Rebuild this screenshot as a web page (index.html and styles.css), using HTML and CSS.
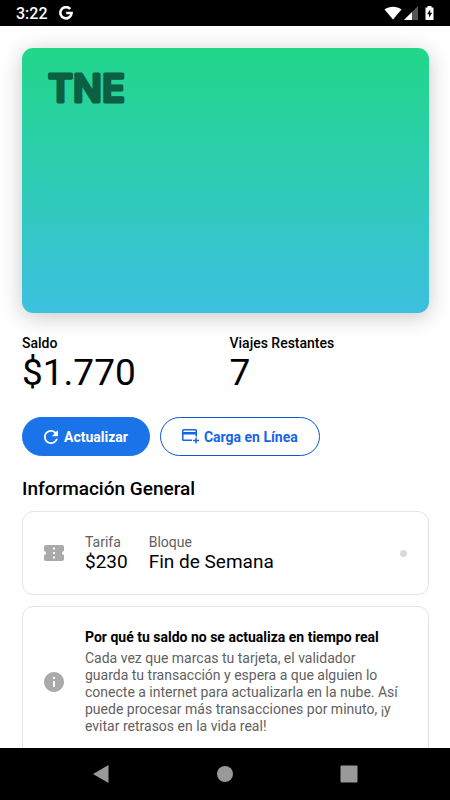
FILE: index.html
```html
<!DOCTYPE html>
<html lang="es">
<head>
<meta charset="utf-8">
<meta name="viewport" content="width=device-width, initial-scale=1">
<title>Tarjeta TNE</title>
<link rel="stylesheet" href="styles.css">
</head>
<body>
<header class="status">
  <time class="clock">3:22</time>
  <svg class="google" viewBox="0 0 14 14" aria-hidden="true"><path d="M11.2 3A5.6 5.6 0 1 0 12.6 7H7.2" fill="none" stroke="#fff" stroke-width="2.6"/></svg>
  <div class="signals">
    <svg width="18" height="14" viewBox="0 0 18 14" aria-hidden="true"><path d="M.5 3.6C5.500-.2 12.500-.2 17.500 3.600L9 13.500Z" fill="#fff"/></svg>
    <svg width="14" height="14" viewBox="0 0 14 14" aria-hidden="true"><path d="M14 0V14H0Z" fill="#555"/><path d="M8 6V14H0Z" fill="#fff"/></svg>
    <svg class="battery" width="9" height="14" viewBox="0 0 9 14" aria-hidden="true"><path d="M2.500 0h4v1.500H8.500V14H.5V1.500h2Z" fill="#fff"/><path d="M5.200 3.500 2 8.200h2v3.300L7.200 6.800h-2Z" fill="#000"/></svg>
  </div>
</header>
<main class="content">
  <section class="pass">
    <svg class="brand" viewBox="0 0 90 34" role="img" aria-label="TNE"><text x="2" y="31">TNE</text></svg>
  </section>
  <dl class="balances">
    <div><dt>Saldo</dt><dd>$1.770</dd></div>
    <div><dt>Viajes Restantes</dt><dd>7</dd></div>
  </dl>
  <div class="actions">
    <button class="btn primary" type="button">
      <svg class="refresh" viewBox="4 4 16 16" aria-hidden="true"><path fill="currentColor" d="M17.650 6.350C16.200 4.900 14.210 4 12 4c-4.420 0-7.990 3.580-7.990 8s3.570 8 7.990 8c3.730 0 6.840-2.550 7.730-6h-2.080c-.82 2.330-3.040 4-5.650 4-3.310 0-6-2.690-6-6s2.690-6 6-6c1.660 0 3.140.69 4.220 1.780L13 11h7V4l-2.350 2.350z"/></svg>
      Actualizar
    </button>
    <button class="btn outline" type="button">
      <svg class="addcard" viewBox="0 0 18 15" aria-hidden="true"><path d="M10 11.250H1.500Q.75 11.250 .75 10.500V1.500Q.75.75 1.500.75h12Q14.250.75 14.250 1.500V7.500M14 8.500v6M11 11.500h6" fill="none" stroke="currentColor" stroke-width="1.500"/><path d="M1 3h13v2.500H1Z" fill="currentColor"/></svg>
      Carga en Línea
    </button>
  </div>
  <h1>Información General</h1>
  <section class="card">
    <svg class="icon" viewBox="2 2 20 20" aria-hidden="true"><path fill="currentColor" d="M20 12c0-1.100.9-2 2-2V6c0-1.100-.9-2-2-2H4c-1.100 0-1.990.9-1.990 2v4c1.100 0 1.990.9 1.990 2s-.89 2-2 2v4c0 1.100.9 2 2 2h16c1.100 0 2-.9 2-2v-4c-1.100 0-2-.9-2-2zm-7 5.500h-2v-2h2v2zm0-4.500h-2v-2h2v2zm0-4.500h-2v-2h2v2z"/></svg>
    <dl class="fare">
      <div><dt>Tarifa</dt><dd>$230</dd></div>
      <div><dt>Bloque</dt><dd>Fin de Semana</dd></div>
    </dl>
    <span class="dot"></span>
  </section>
  <section class="card info">
    <svg class="icon" viewBox="2 2 20 20" aria-hidden="true"><path fill="currentColor" d="M12 2C6.480 2 2 6.480 2 12s4.480 10 10 10 10-4.480 10-10S17.520 2 12 2zm1 15h-2v-6h2v6zm0-8h-2V7h2v2z"/></svg>
    <div class="note">
      <h2>Por qué tu saldo no se actualiza en tiempo real</h2>
      <p>Cada vez que marcas tu tarjeta, el validador guarda tu transacción y espera a que alguien lo conecte a internet para actualizarla en la nube. Así puede procesar más transacciones por minuto, ¡y evitar retrasos en la vida real!</p>
    </div>
  </section>
</main>
<nav class="navbar" aria-label="Sistema">
  <button type="button" aria-label="Atrás"><svg viewBox="0 0 18 18"><path d="M16.500 0V18L1 9Z" fill="#999"/></svg></button>
  <button type="button" aria-label="Inicio"><svg viewBox="0 0 18 18"><circle cx="9" cy="9" r="8" fill="#999"/></svg></button>
  <button type="button" aria-label="Recientes"><svg viewBox="0 0 18 18"><rect x=".5" y=".5" width="17" height="17" rx="1" fill="#999"/></svg></button>
</nav>
</body>
</html>
```
FILE: styles.css
```css
* { box-sizing: border-box; }
body {
  margin: 0;
  height: 100vh;
  display: flex;
  flex-direction: column;
  background: #fff;
  color: #000;
  font-family: Roboto, "Liberation Sans", sans-serif;
}
h1, h2, p, dl, dd { margin: 0; }
button { font-family: inherit; cursor: pointer; }
svg { display: block; flex: none; }

.status {
  flex: none;
  display: flex;
  align-items: center;
  height: 26px;
  padding: 0 16px;
  background: #000;
  color: #fff;
}
.clock { font-size: 16px; font-weight: 500; line-height: 26px; padding-top: 2px; }
.google { width: 14px; height: 14px; margin-left: 11px; }
.signals { display: flex; align-items: center; gap: 2px; margin-left: auto; }
.battery { margin-left: 5px; }

.content {
  flex: 1;
  min-height: 0;
  overflow: hidden;
  padding: 22px 21px 0 22px;
}
.pass {
  aspect-ratio: 407 / 265;
  padding: 23px 24px;
  border-radius: 11px;
  background: linear-gradient(#21d789, #3cc0e0);
  box-shadow: 0 4px 22px rgba(0, 0, 0, 0.22);
}
.brand { width: 90px; height: 34px; overflow: visible; }
.brand text {
  font-family: Inter, Roboto, sans-serif;
  font-size: 38px;
  font-weight: 600;
  fill: #0b5f43;
  stroke: #0b5f43;
  stroke-width: 3px;
  stroke-linejoin: round;
}

.balances { display: grid; grid-template-columns: 1fr 1fr; gap: 8px; margin-top: 21px; }
.balances dt { font-size: 14px; font-weight: 500; line-height: 18px; }
.balances dd { font-size: 37px; line-height: 42px; }

.actions { display: flex; gap: 10px; margin-top: 23px; }
.btn {
  display: flex;
  align-items: center;
  height: 39px;
  padding: 0 21px;
  border: 1px solid #1a73e8;
  border-radius: 20px;
  font-size: 14px;
  font-weight: 700;
}
.primary { gap: 6px; background: #1a73e8; color: #fff; }
.outline { gap: 4px; border-color: #0b57d9; background: #fff; color: #1765e5; }
.refresh { width: 14px; height: 14px; }
.addcard { width: 18px; height: 15px; }

h1 { margin-top: 22px; font-size: 19px; font-weight: 500; line-height: 22px; }

.card {
  display: flex;
  align-items: center;
  gap: 21px;
  margin-top: 11px;
  padding: 21px;
  border: 1px solid #e4e4e4;
  border-radius: 11px;
}
.icon { width: 20px; height: 20px; color: #aaa; }
.fare { display: flex; gap: 21px; }
.fare dt { font-size: 14px; line-height: 18px; color: #616161; }
.fare dd { font-size: 19px; line-height: 22px; }
.dot { width: 7px; height: 7px; margin-left: auto; border-radius: 50%; background: #d9d9d9; }
.info { padding-right: 30px; }
.info h2 { font-size: 14px; font-weight: 700; line-height: 18px; }
.info p { margin-top: 4px; font-size: 14px; line-height: 17px; color: #616161; }

.navbar {
  flex: none;
  display: grid;
  grid-template-columns: repeat(3, 124px);
  justify-content: center;
  height: 52px;
  background: #000;
}
.navbar button { display: grid; place-items: center; padding: 0; border: 0; background: none; }
.navbar svg { width: 18px; height: 18px; }
```
